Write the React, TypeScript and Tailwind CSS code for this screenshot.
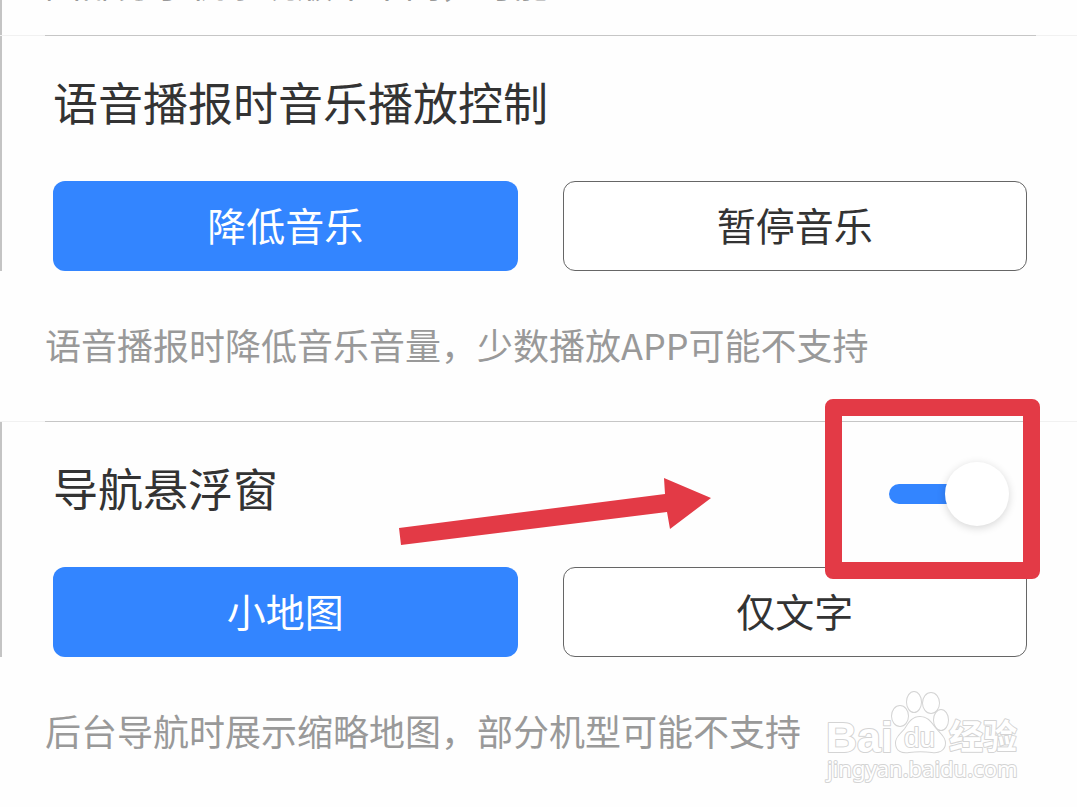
import React, { useState } from 'react';

interface Option {
  value: string;
  label: string;
}

interface SectionProps {
  title: string;
  hint: string;
  options: Option[];
  action?: React.ReactNode;
  children?: React.ReactNode;
}

const musicOptions: Option[] = [
  { value: 'lower', label: '降低音乐' },
  { value: 'pause', label: '暂停音乐' },
];

const floatOptions: Option[] = [
  { value: 'map', label: '小地图' },
  { value: 'text', label: '仅文字' },
];

const Divider = () => (
  <div className="bg-[#f1f1f1] pl-[45px] pr-[41px]">
    <hr className="h-px border-0 bg-[#c6c6c6]" />
  </div>
);

const Section: React.FC<SectionProps> = ({ title, hint, options, action, children }) => {
  const [selected, setSelected] = useState(options[0].value);

  return (
    <section className="relative pb-[53px]">
      <Divider />
      <div className="border-l-2 border-[#c4c4c4] pt-[34px] pr-[50px] pl-[51px]">
        <div className="flex h-16 items-center justify-between">
          <h2 className="text-[45px] leading-[64px] text-[#333]">{title}</h2>
          {action}
        </div>
        <div className="mt-[47px] grid grid-cols-2 gap-[45px]">
          {options.map((option) => (
            <button
              key={option.value}
              type="button"
              aria-pressed={selected === option.value}
              onClick={() => setSelected(option.value)}
              className={`h-[90px] rounded-xl pb-1 text-[39px] ${
                selected === option.value
                  ? 'bg-[#3385ff] text-white'
                  : 'border border-[#666] bg-white text-[#333]'
              }`}
            >
              {option.label}
            </button>
          ))}
        </div>
      </div>
      <p className="mt-[49px] pl-[45px] text-[36px] leading-[48px] text-[#999]">{hint}</p>
      {children}
    </section>
  );
};

const Switch = () => {
  const [on, setOn] = useState(true);

  return (
    <input
      type="checkbox"
      role="switch"
      aria-label="导航悬浮窗"
      checked={on}
      onChange={(e) => setOn(e.target.checked)}
      className="relative mt-3 mr-[18px] h-16 w-[120px] shrink-0 appearance-none before:absolute before:top-[22px] before:left-0 before:h-5 before:w-[110px] before:rounded-full before:bg-gray-300 checked:before:bg-[#3385ff] after:absolute after:top-0 after:left-0 after:size-16 after:rounded-full after:bg-white after:shadow-[0_2px_8px_rgba(0,0,0,0.16)] checked:after:left-14"
    />
  );
};

const Arrow = () => (
  <svg
    viewBox="0 0 312 68"
    className="pointer-events-none absolute top-[57px] left-[399px] h-[68px] w-[312px]"
    aria-hidden="true"
  >
    <polygon points="0,50 266,16 265,0 312,20 271,51 268,34 2,67" fill="#e33a46" />
  </svg>
);

const Watermark = () => (
  <svg
    viewBox="0 0 200 96"
    className="pointer-events-none absolute right-[54px] bottom-[21px] h-24 w-[200px]"
    fill="#fff"
    stroke="#d4d4d4"
    strokeWidth="2"
    strokeLinejoin="round"
    paintOrder="stroke"
    aria-hidden="true"
  >
    <text x="3" y="62" fontSize="43" fontWeight="700" fontFamily="'Liberation Sans', sans-serif">
      Bai
    </text>
    <ellipse cx="77" cy="26" rx="8" ry="10" />
    <ellipse cx="91" cy="12" rx="7" ry="10" />
    <ellipse cx="108" cy="13" rx="8" ry="10" />
    <ellipse cx="118" cy="30" rx="7" ry="10" />
    <path d="M97 27c-8 0-11 6-15 12-4 5-9 8-9 14 0 8 6 10 13 9 8-1 15-1 23 0 7 1 13-2 13-9 0-6-5-9-9-14-5-6-8-12-16-12z" />
    <text x="81" y="57" fontSize="28" fontFamily="'Liberation Sans', sans-serif">
      du
    </text>
    <text x="126" y="59" fontSize="34" fontWeight="700" fontFamily="'Noto Sans CJK SC', sans-serif">
      经验
    </text>
    <text x="4" y="87" fontSize="22" fontFamily="'Noto Sans', sans-serif">
      jingyan.baidu.com
    </text>
  </svg>
);

const App: React.FC = () => (
  <main className="overflow-hidden bg-[#fefefe] font-['Noto_Sans_CJK_SC',sans-serif]">
    {/* tail of the previous setting, scrolled under the top edge */}
    <div className="flex h-[35px] items-end overflow-hidden border-l-2 border-[#c4c4c4] pb-[29px] pl-[43px]">
      <p className="text-[36px] leading-[48px] text-[#999]">因部分手机系统版本不同，可能</p>
    </div>

    <Section
      title="语音播报时音乐播放控制"
      hint="语音播报时降低音乐音量，少数播放APP可能不支持"
      options={musicOptions}
    />

    <Section
      title="导航悬浮窗"
      hint="后台导航时展示缩略地图，部分机型可能不支持"
      options={floatOptions}
      action={<Switch />}
    >
      <Arrow />
      <div className="pointer-events-none absolute -top-[22px] right-[37px] h-[180px] w-[215px] rounded-lg border-[17px] border-[#e33a46]" />
      <Watermark />
    </Section>
  </main>
);

export default App;
